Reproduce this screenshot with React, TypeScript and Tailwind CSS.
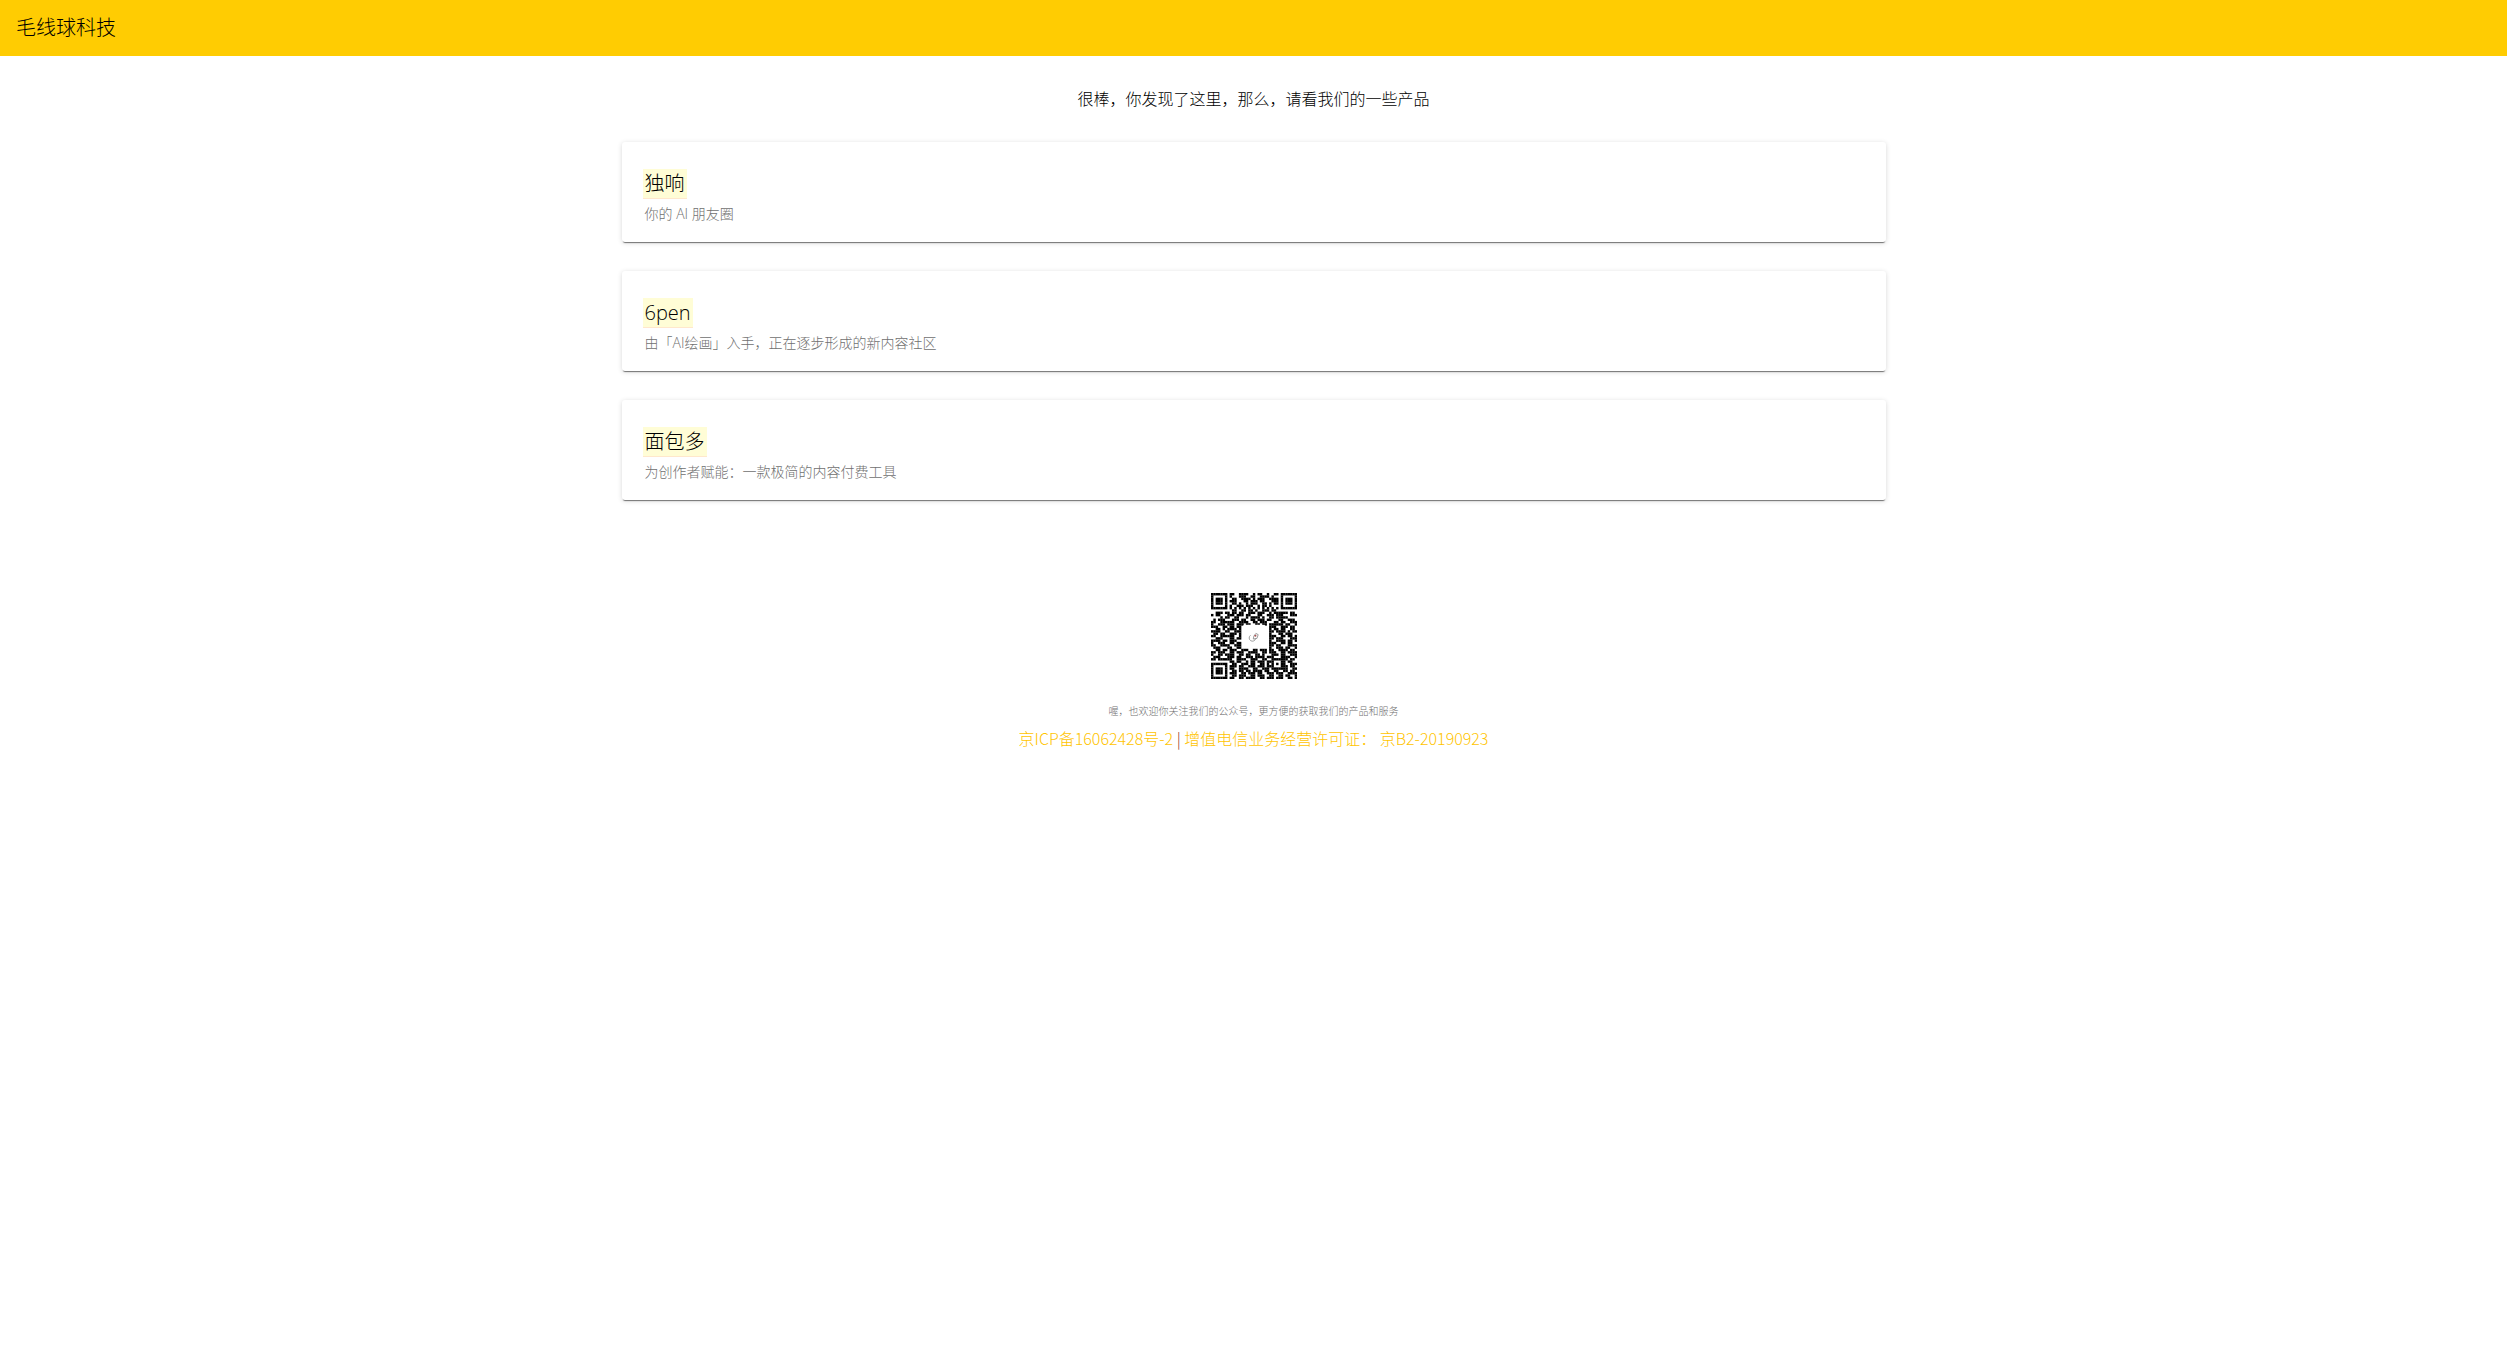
import React from "react";

interface Product {
    name: string;
    description: string;
    href: string;
}

const PRODUCTS: Product[] = [
    { name: "独响", description: "你的 AI 朋友圈", href: "#duxiang" },
    { name: "6pen", description: "由「AI绘画」入手，正在逐步形成的新内容社区", href: "#6pen" },
    { name: "面包多", description: "为创作者赋能：一款极简的内容付费工具", href: "#mianbaoduo" },
];

// One string per row of modules, "#" is a dark module
const QR_ROWS = [
    "#######.##..####..#.##..#..##.#######",
    "#.....#.#...###..##..####.#...#.....#",
    "#.###.#..##..####.#.###..####.#.###.#",
    "#.###.#.###...##.###.##...###.#.###.#",
    "#.###.#..##.#..#.###..##.#.##.#.###.#",
    "#.....#.#..###.###..#.##.#....#.....#",
    "#######.#.#.#.#.#.#.#.#.#.#.#.#######",
    ".........##..##.##.#..###.##.........",
    "..###.##.##.##..###.###..#.######.##.",
    "#.##...###.###.##...##..###.###...###",
    "....#.##..##...#.####.#..##.#####....",
    ".#.###...###.##..##.###.##...##..###.",
    "##..######..####..##.###...##.##..###",
    "#..###.###.###.##..##.##.######.##..#",
    "###..##.##.##............###..###.##.",
    "..##.#.####.#............#.##.##..##.",
    "####..##..###............##.####.#.##",
    ".##.##..###.#............#...##.###..",
    "##..######..#............###..##.##.#",
    "..###...##.##............##.###...###",
    "####.##.###..............#..####.##.#",
    "#..###..##.##............###..##.##..",
    "##..####..###............##.##...####",
    ".###...##..##............#..###.##..#",
    "..##.##.###..###..##.###.##..####.##.",
    "##.###..##.###..####..##.###..##.####",
    "#..##.####..##.##..##.#...###.##..###",
    ".###...###.##..###.####.###...####..#",
    "##.######..####..###..##..#######.##.",
    "........##.##..#.##.###.###...##.##..",
    "#######..##..###.##..##.#.#.#.##..###",
    "#.....#.###.##..###.###.###...###.##.",
    "#.###.#.##..####..##..###.#######..##",
    "#.###.#..##.##.##.####.##..##..##.##.",
    "#.###.#.###..##.###.##..###.###..####",
    "#.....#..##.###..##.###..##..##.##..#",
    "#######.##..##.####..##.###.###..##.#",
];

function QrCode() {
    return (
        <svg
            role="img"
            aria-label="公众号二维码"
            viewBox="0 0 37 37"
            className="size-[86px]"
        >
            {QR_ROWS.map((row, y) =>
                row.split("").map((cell, x) =>
                    cell === "#" ? <rect key={`${x}-${y}`} x={x} y={y} width={1.05} height={1.05} /> : null
                )
            )}
            <rect x={13.7} y={13.7} width={9.8} height={9.8} rx={1} fill="#fff" />
            {/* Logo in the middle of the code */}
            <g fill="none" strokeWidth={0.35}>
                <path d="M17 18.2a1.4 1.4 0 1 0 2.2 1.4M18.4 18.6l.9-1.2 1 .5-.5 1.6-1.6.3z" stroke="#888" />
                <circle cx={19.1} cy={18.4} r={0.45} fill="#a55" />
            </g>
        </svg>
    );
}

function ProductCard({ product }: { product: Product }) {
    return (
        <a
            href={product.href}
            className="flex h-[100px] flex-col items-start rounded-[3px] bg-white px-[21px] pt-[27px] shadow-[0_2px_1px_-1px_rgba(0,0,0,0.5),0_1px_5px_rgba(0,0,0,0.16)]"
        >
            <h2 className="border-b border-[#ffe8cc] bg-[#fffdd6] px-[2px] text-[20px] leading-[29px] text-black">
                {product.name}
            </h2>
            <p className="px-[2px] text-[14px] leading-[30px] text-[#707070]">{product.description}</p>
        </a>
    );
}

export default function App() {
    return (
        <div className="min-h-screen bg-white font-['Open_Sans','Noto_Sans_CJK_SC',sans-serif] font-light text-black">
            <header className="flex h-14 items-center bg-[#ffcc02] px-4">
                <h1 className="text-[20px] leading-[30px]">毛线球科技</h1>
            </header>

            <main className="mx-auto max-w-7xl px-2">
                <p className="pt-[31px] text-center text-[16px] leading-6">
                    很棒，你发现了这里，那么，请看我们的一些产品
                </p>
                <div className="mt-[31px] flex flex-col gap-[29px]">
                    {PRODUCTS.map((product) => (
                        <ProductCard key={product.name} product={product} />
                    ))}
                </div>
            </main>

            <footer className="mt-[93px] flex flex-col items-center">
                <QrCode />
                <p className="mt-6 text-[10px] leading-4 text-[#707070]">
                    喔，也欢迎你关注我们的公众号，更方便的获取我们的产品和服务
                </p>
                <p className="mt-2 font-['Noto_Sans_CJK_SC',sans-serif] text-[16px] leading-[22px] text-[#8f2f1c]">
                    <a href="#icp" className="text-[#ffc400]">京ICP备16062428号-2</a>
                    {" | "}
                    <a href="#license" className="text-[#ffc400]">增值电信业务经营许可证： 京B2-20190923</a>
                </p>
            </footer>
        </div>
    );
}
